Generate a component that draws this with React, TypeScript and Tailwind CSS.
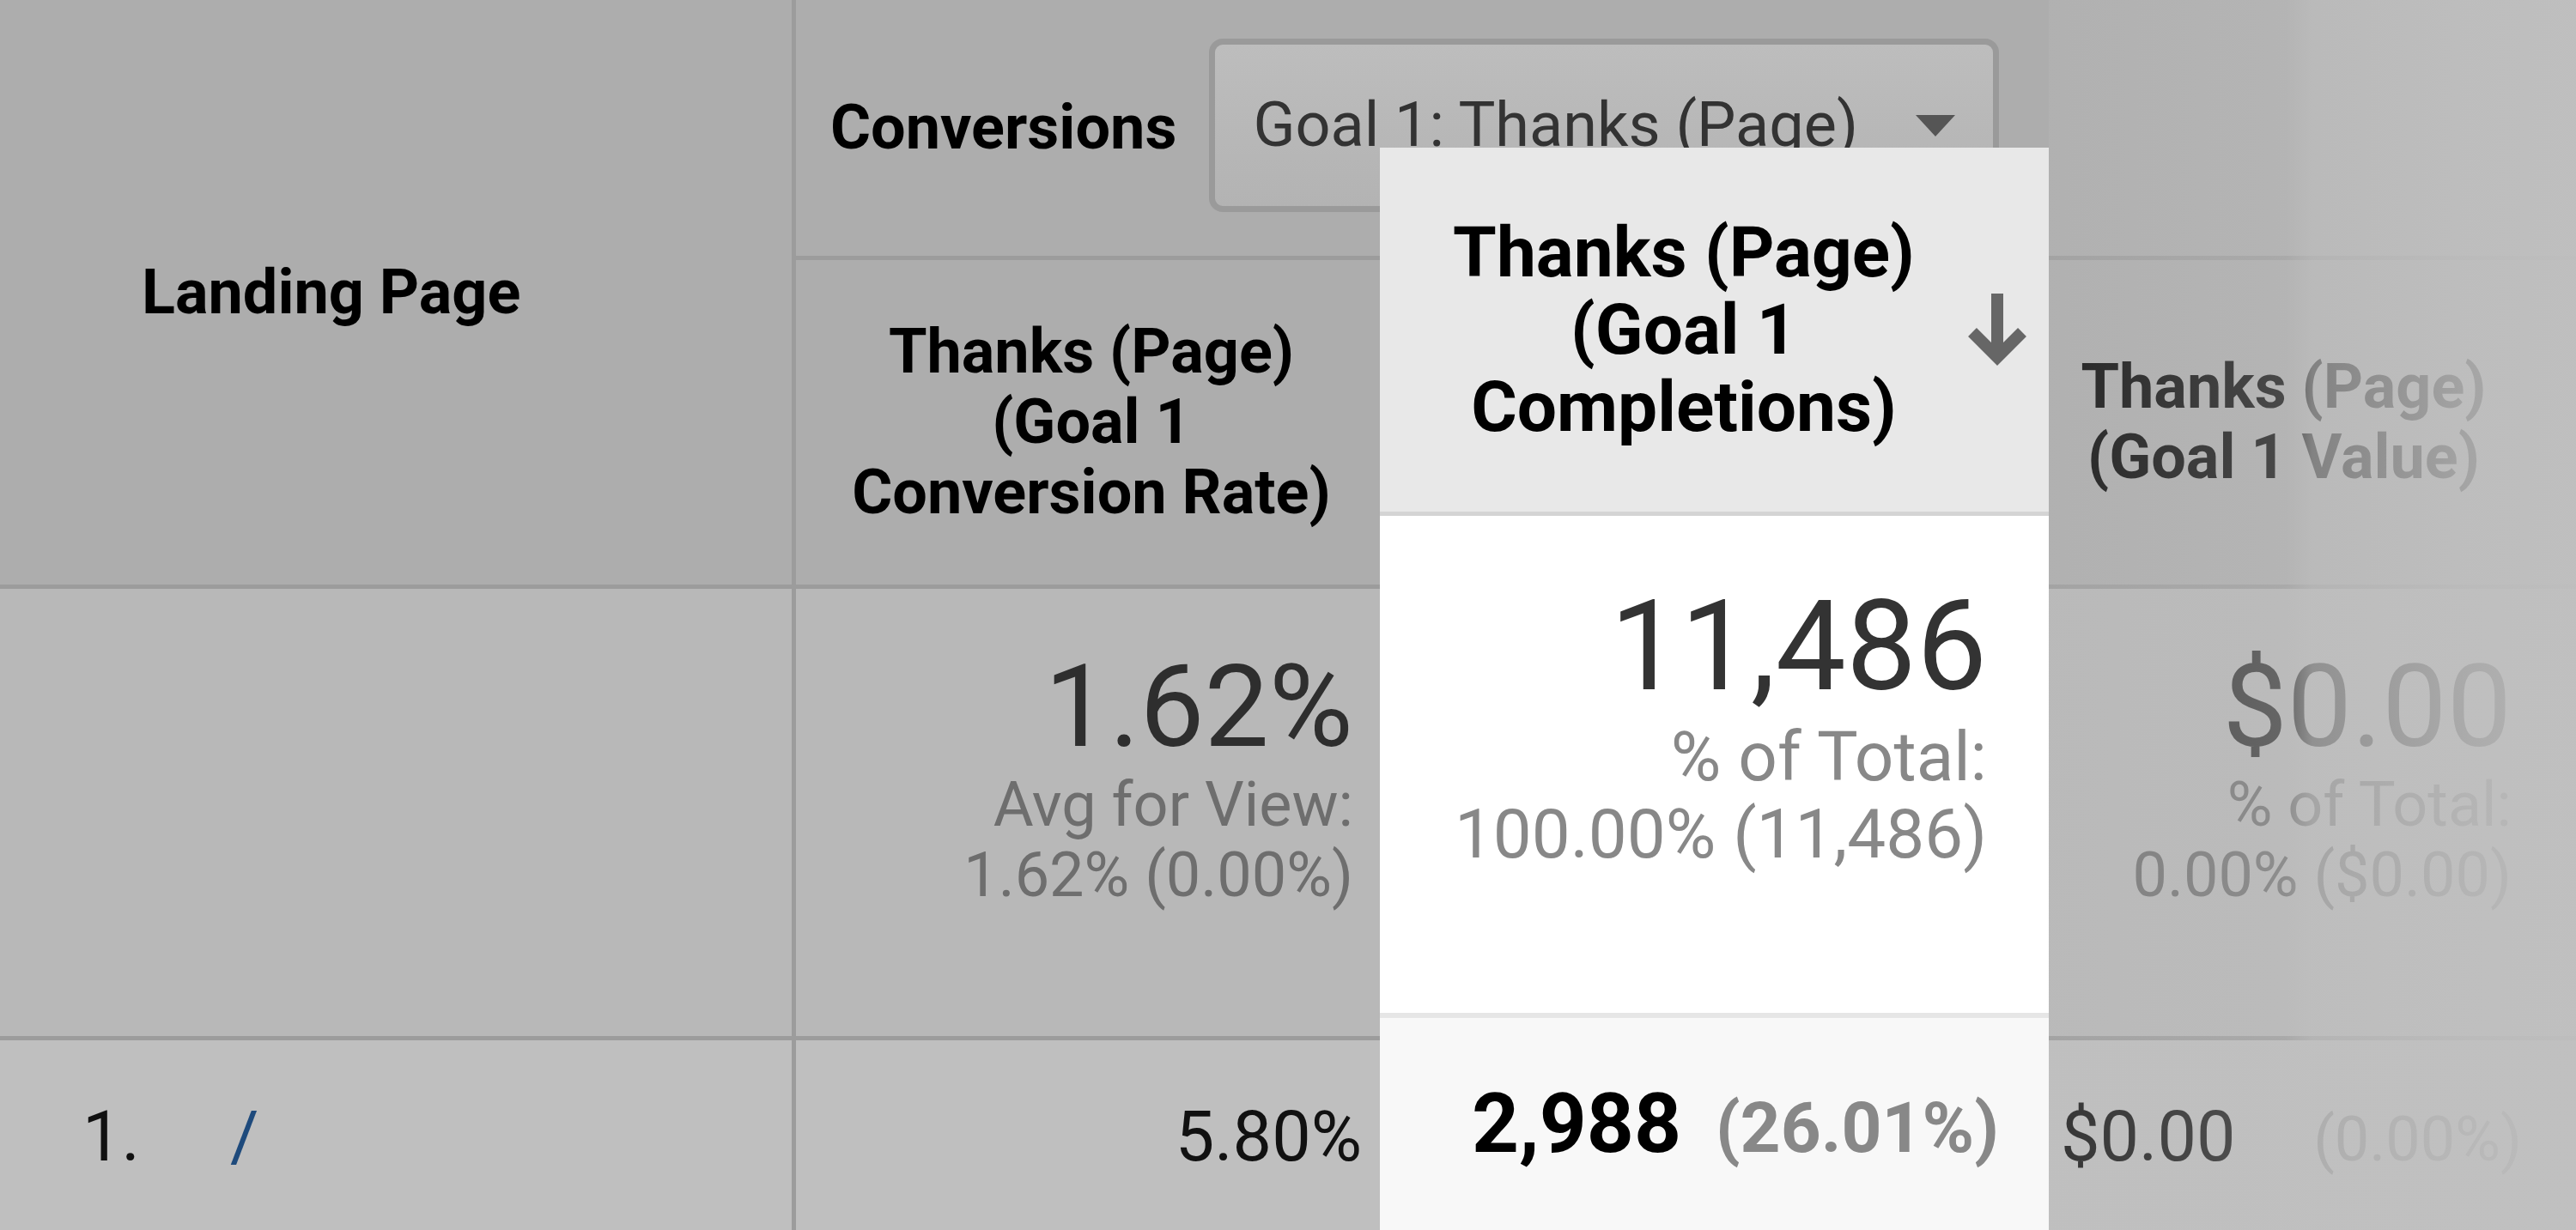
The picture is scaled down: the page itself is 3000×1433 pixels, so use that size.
import React from 'react';

// sort arrow used in the highlighted column header
const SortArrow: React.FC<{ className?: string }> = ({ className }) => (
  <svg width="72" height="84" viewBox="0 0 72 84" className={className} overflow="visible">
    <path d="M36 0V74M7 45l29 29 29-29" stroke="#666" strokeWidth="14" fill="none" />
  </svg>
);

const App: React.FC = () => {
  return (
    <div className="relative w-[3000px] h-[1433px] overflow-hidden flex flex-col bg-[#bfbfbf] font-[Roboto,sans-serif]">
      {/* header */}
      <div className="flex h-[686px] shrink-0 bg-[#adadad] border-b-[5px] border-[#9c9c9c]">
        <div className="w-[927px] shrink-0 border-r-[5px] border-[#9c9c9c] flex items-center pl-[165px]">
          <span className="text-[72px] leading-none font-bold text-black">Landing Page</span>
        </div>
        <div className="flex-1 flex flex-col">
          <div className="h-[303px] shrink-0 border-b-[5px] border-[#9c9c9c] flex items-center pl-[40px]">
            <span className="text-[72px] leading-none font-bold text-black">Conversions</span>
            <div className="ml-[38px] mb-[6px] w-[920px] h-[202px] rounded-[16px] border-[7px] border-[#9a9a9a] bg-gradient-to-b from-[#bdbdbd] to-[#b3b3b3] flex items-center justify-between pl-[44px] pr-[44px]">
              <span className="text-[72px] leading-none text-[#333]">Goal 1: Thanks (Page)</span>
              <svg width="46" height="25" viewBox="0 0 46 25">
                <polygon points="0,0 46,0 23,25" fill="#555" />
              </svg>
            </div>
          </div>
          <div className="flex-1 flex">
            <div className="w-[688px] shrink-0 flex items-center justify-center text-center text-[72px] leading-[82px] font-bold text-black">
              <div>
                Thanks (Page)
                <br />
                (Goal 1
                <br />
                Conversion Rate)
              </div>
            </div>
            <div className="w-[775px] shrink-0" />
            <div className="w-[577px] shrink-0 flex items-center justify-center pr-[38px] text-center text-[72px] leading-[82px] font-bold text-black">
              <div>
                Thanks (Page)
                <br />
                (Goal 1 Value)
              </div>
            </div>
          </div>
        </div>
      </div>

      {/* summary row */}
      <div className="flex h-[526px] shrink-0 bg-[#b8b8b8] border-b-[5px] border-[#9c9c9c]">
        <div className="w-[927px] shrink-0 border-r-[5px] border-[#9c9c9c]" />
        <div className="w-[688px] shrink-0 flex flex-col items-end pt-[71px] pr-[39px]">
          <span className="text-[134px] leading-none text-[#2e2e2e]">1.62%</span>
          <span className="mt-[6px] text-right text-[72px] leading-[82px] text-[#6e6e6e]">
            Avg for View:
            <br />
            1.62% (0.00%)
          </span>
        </div>
        <div className="w-[775px] shrink-0" />
        <div className="w-[577px] shrink-0 flex flex-col items-end pt-[71px] pr-[42px]">
          <span className="text-[134px] leading-none text-[#2e2e2e]">$0.00</span>
          <span className="mt-[6px] text-right text-[72px] leading-[82px] text-[#6e6e6e] whitespace-nowrap">
            % of Total:
            <br />
            0.00% ($0.00)
          </span>
        </div>
      </div>

      {/* row 1 */}
      <div className="flex flex-1 text-[81px] leading-none text-[#111]">
        <div className="w-[927px] shrink-0 border-r-[5px] border-[#9c9c9c] flex pt-[72px] pl-[96px]">
          <span className="w-[172px]">1.</span>
          <span className="text-[#1e4a7c]">/</span>
        </div>
        <div className="w-[688px] shrink-0 pt-[72px] pr-[29px] text-right">5.80%</div>
        <div className="w-[775px] shrink-0" />
        <div className="w-[577px] shrink-0 flex items-baseline justify-between pt-[72px] pl-[10px] pr-[30px]">
          <span>$0.00</span>
          <span className="text-[72px] text-[#888]">(0.00%)</span>
        </div>
      </div>

      {/* fade on the right */}
      <div className="absolute left-[2386px] right-0 top-0 bottom-0 pointer-events-none bg-[linear-gradient(to_right,rgba(192,192,192,0.2)_0%,rgba(192,192,192,0.38)_45%,rgba(192,192,192,0.68)_50%,rgba(192,192,192,0.86)_80%,rgba(192,192,192,0.93)_100%)]" />

      {/* highlighted column */}
      <div className="absolute left-[1607px] top-[172px] bottom-0 w-[779px] flex flex-col bg-[#f8f8f8]">
        <div className="h-[429px] shrink-0 bg-[#e8e8e8] border-b-[5px] border-[#d4d4d4] flex items-center">
          <div className="ml-[54px] w-[600px] shrink-0 text-center text-[82px] leading-[90px] font-bold text-black">
            Thanks (Page)
            <br />
            (Goal 1
            <br />
            Completions)
          </div>
          <SortArrow className="ml-[29px] shrink-0" />
        </div>
        <div className="h-[585px] shrink-0 bg-white border-b-[6px] border-[#e6e6e6] flex flex-col items-end pt-[80px] pr-[72px]">
          <span className="text-[146px] leading-none text-[#333]">11,486</span>
          <span className="mt-[10px] text-right text-[80px] leading-[90px] text-[#888]">
            % of Total:
            <br />
            100.00% (11,486)
          </span>
        </div>
        <div className="flex items-baseline justify-end gap-[40px] pt-[75px] pr-[58px]">
          <span className="text-[96px] leading-none font-bold text-black">2,988</span>
          <span className="text-[82px] leading-none font-bold text-[#888]">(26.01%)</span>
        </div>
      </div>
    </div>
  );
};

export default App;
